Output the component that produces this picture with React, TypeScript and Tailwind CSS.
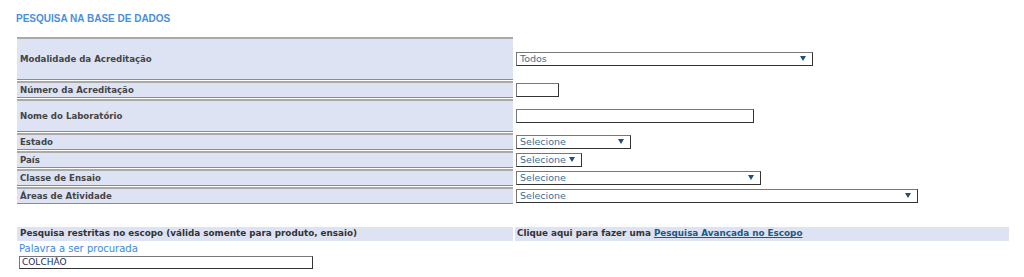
const verdana = { fontFamily: '"DejaVu Sans", Verdana, sans-serif' };

type Field =
  | { kind: "select"; value: string; width: string }
  | { kind: "input"; width: string };

const rows: { label: string; height: string; field: Field }[] = [
  { label: "Modalidade da Acreditação", height: "h-[43px]", field: { kind: "select", value: "Todos", width: "w-[297px]" } },
  { label: "Número da Acreditação", height: "h-[17px]", field: { kind: "input", width: "w-[43px]" } },
  { label: "Nome do Laboratório", height: "h-[33px]", field: { kind: "input", width: "w-[238px]" } },
  { label: "Estado", height: "h-[17px]", field: { kind: "select", value: "Selecione", width: "w-[115px]" } },
  { label: "País", height: "h-[17px]", field: { kind: "select", value: "Selecione", width: "w-[66px]" } },
  { label: "Classe de Ensaio", height: "h-[17px]", field: { kind: "select", value: "Selecione", width: "w-[245px]" } },
  { label: "Áreas de Atividade", height: "h-[17px]", field: { kind: "select", value: "Selecione", width: "w-[402px]" } },
];

function FakeSelect({ value, width }: { value: string; width: string }) {
  return (
    <div
      className={`${width} h-[14px] flex items-center justify-between border border-[#333] border-t-[#777] border-l-[#777] bg-white pl-[3px] pr-[6px] text-[9.5px] text-[#3a6f98]`}
    >
      <span className="leading-none">{value}</span>
      <svg width="6" height="5" viewBox="0 0 6 5">
        <path d="M0 0h6L3 5z" fill="#1f4f7d" />
      </svg>
    </div>
  );
}

function FakeInput({ width }: { width: string }) {
  return <div className={`${width} h-[14px] border border-[#333] border-t-[#777] border-l-[#777] bg-white`} />;
}

export default function App() {
  return (
    <div className="w-[1024px] h-[277px] bg-white overflow-hidden" style={verdana}>
      <h1
        className="pl-4 pt-[13px] text-[10px] font-bold leading-[12px] text-[#4a8fdc]"
        style={{ fontFamily: '"Liberation Sans", Arial, sans-serif' }}
      >
        PESQUISA NA BASE DE DADOS
      </h1>

      <div className="mt-[12px] ml-[17px] flex flex-col gap-[1px]">
        {rows.map((r) => (
          <div key={r.label} className="flex items-center">
            <div
              className={`${r.height} w-[496px] flex items-center border-t-2 border-b border-t-[#a9a9a9] border-b-[#8c8c8c] bg-[#dde3f3] pl-[3px] pt-[1px] text-[8.6px] font-bold text-[#444]`}
            >
              {r.label}
            </div>
            <div className="pl-[3px]">
              {r.field.kind === "select" ? (
                <FakeSelect value={r.field.value} width={r.field.width} />
              ) : (
                <FakeInput width={r.field.width} />
              )}
            </div>
          </div>
        ))}
      </div>

      <div className="mt-[23px] ml-[17px] flex gap-[2px] text-[8.8px] font-bold text-[#333]">
        <div className="w-[496px] h-[14px] flex items-center bg-[#dde3f3] pl-[3px]">
          Pesquisa restritas no escopo (válida somente para produto, ensaio)
        </div>
        <div className="w-[494px] h-[14px] flex items-center bg-[#dde3f3] pl-[2px]">
          Clique aqui para fazer uma&nbsp;
          <a href="#" className="text-[#1b5a82] underline">
            Pesquisa Avançada no Escopo
          </a>
        </div>
      </div>

      <div className="ml-[19px] mt-[1px] text-[10px] leading-[13px] text-[#3b8ae0]">Palavra a ser procurada</div>
      <div className="ml-[19px] mt-[1px] w-[294px] h-[13px] flex items-center border border-[#333] border-t-[#777] border-l-[#777] bg-white pl-[2px] text-[9px] leading-none text-[#1a2f5a]">
        COLCHÃO
      </div>
    </div>
  );
}
